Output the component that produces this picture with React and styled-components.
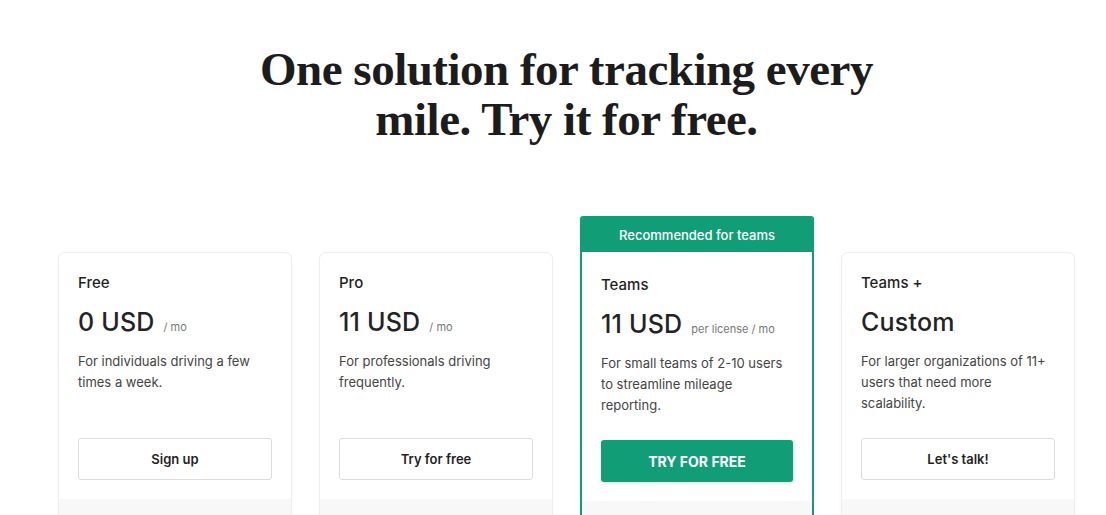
import React from "react";
import styled, { createGlobalStyle } from "styled-components";

const GlobalStyle = createGlobalStyle`
  html, body {
    margin: 0;
    padding: 0;
    background: #ffffff;
    overflow: hidden;
  }
  body {
    font-family: "Inter", "Noto Sans", sans-serif;
    color: #222;
  }
`;

const plans = [
  {
    name: "Free",
    price: "0 USD",
    unit: "/ mo",
    text: "For individuals driving a few times a week.",
    cta: "Sign up",
  },
  {
    name: "Pro",
    price: "11 USD",
    unit: "/ mo",
    text: "For professionals driving frequently.",
    cta: "Try for free",
  },
  {
    name: "Teams",
    price: "11 USD",
    unit: "per license / mo",
    text: "For small teams of 2-10 users to streamline mileage reporting.",
    cta: "Try for free",
    featured: true,
    badge: "Recommended for teams",
  },
  {
    name: "Teams +",
    price: "Custom",
    text: "For larger organizations of 11+ users that need more scalability.",
    cta: "Let's talk!",
  },
];

export default function App() {
  return (
    <>
      <GlobalStyle />
      <Page>
        <Heading>
          One solution for tracking every
          <br />
          mile. Try it for free.
        </Heading>
        <Plans>
          {plans.map((p) => (
            <Card key={p.name} $featured={p.featured}>
              {p.badge && <Badge>{p.badge}</Badge>}
              <CardBody $featured={p.featured}>
                <PlanName>{p.name}</PlanName>
                <PriceRow>
                  <Price>{p.price}</Price>
                  {p.unit && <Unit>{p.unit}</Unit>}
                </PriceRow>
                <Description>{p.text}</Description>
                <Button $primary={p.featured}>{p.cta}</Button>
              </CardBody>
              <CardFooter />
            </Card>
          ))}
        </Plans>
      </Page>
    </>
  );
}

const Page = styled.div`
  width: 1017px;
  padding: 44px 0 0 58px;
`;

const Heading = styled.h1`
  margin: 0;
  text-align: center;
  font-family: "Liberation Serif", "Times New Roman", serif;
  font-weight: 700;
  font-size: 47px;
  line-height: 50px;
  letter-spacing: -0.5px;
  color: #1c1c1c;
`;

const Plans = styled.div`
  display: grid;
  grid-template-columns: repeat(4, 234px);
  column-gap: 27px;
  align-items: start;
  margin-top: 72px;
  padding-top: 36px;
`;

const Card = styled.div`
  display: flex;
  flex-direction: column;
  margin-top: ${(p) => (p.$featured ? "-36px" : "0")};
  background: #fff;
  border: ${(p) => (p.$featured ? "2px solid #119e77" : "1px solid #eeeeee")};
  border-radius: ${(p) => (p.$featured ? "3px" : "7px")};
  box-shadow: ${(p) =>
    p.$featured ? "none" : "0 1px 4px rgba(0, 0, 0, 0.03)"};
  overflow: hidden;
`;

const Badge = styled.div`
  height: 34px;
  background: #119e77;
  color: #fff;
  font-size: 13px;
  font-weight: 500;
  display: flex;
  align-items: center;
  justify-content: center;
`;

const CardBody = styled.div`
  padding: ${(p) => (p.$featured ? "23px 19px 19px" : "20px 19px 19px")};
  display: flex;
  flex-direction: column;
`;

const PlanName = styled.div`
  font-size: 15px;
  font-weight: 500;
  line-height: 20px;
  color: #1f1f1f;
`;

const PriceRow = styled.div`
  display: flex;
  align-items: baseline;
  gap: 9px;
  margin-top: 13px;
  height: 32px;
`;

const Price = styled.span`
  font-size: 25px;
  font-weight: 500;
  line-height: 32px;
  color: #232323;
  letter-spacing: 0.2px;
`;

const Unit = styled.span`
  font-size: 11px;
  color: #777;
`;

const Description = styled.p`
  margin: 13px 0 0;
  min-height: 63px;
  font-size: 13px;
  line-height: 21px;
  color: #444;
`;

const Button = styled.button`
  margin-top: 24px;
  height: 42px;
  width: 100%;
  border-radius: 3px;
  font-family: inherit;
  cursor: pointer;
  ${(p) =>
    p.$primary
      ? `
    background: #119e77;
    border: none;
    color: #fff;
    font-size: 14px;
    font-weight: 700;
    text-transform: uppercase;
    box-shadow: 1px 2px 3px rgba(17, 158, 119, 0.18);
  `
      : `
    background: #fff;
    border: 1px solid #dcdcdc;
    color: #1f1f1f;
    font-size: 13px;
    font-weight: 600;
  `}
`;

const CardFooter = styled.div`
  height: 40px;
  background: #f8f8f8;
`;
